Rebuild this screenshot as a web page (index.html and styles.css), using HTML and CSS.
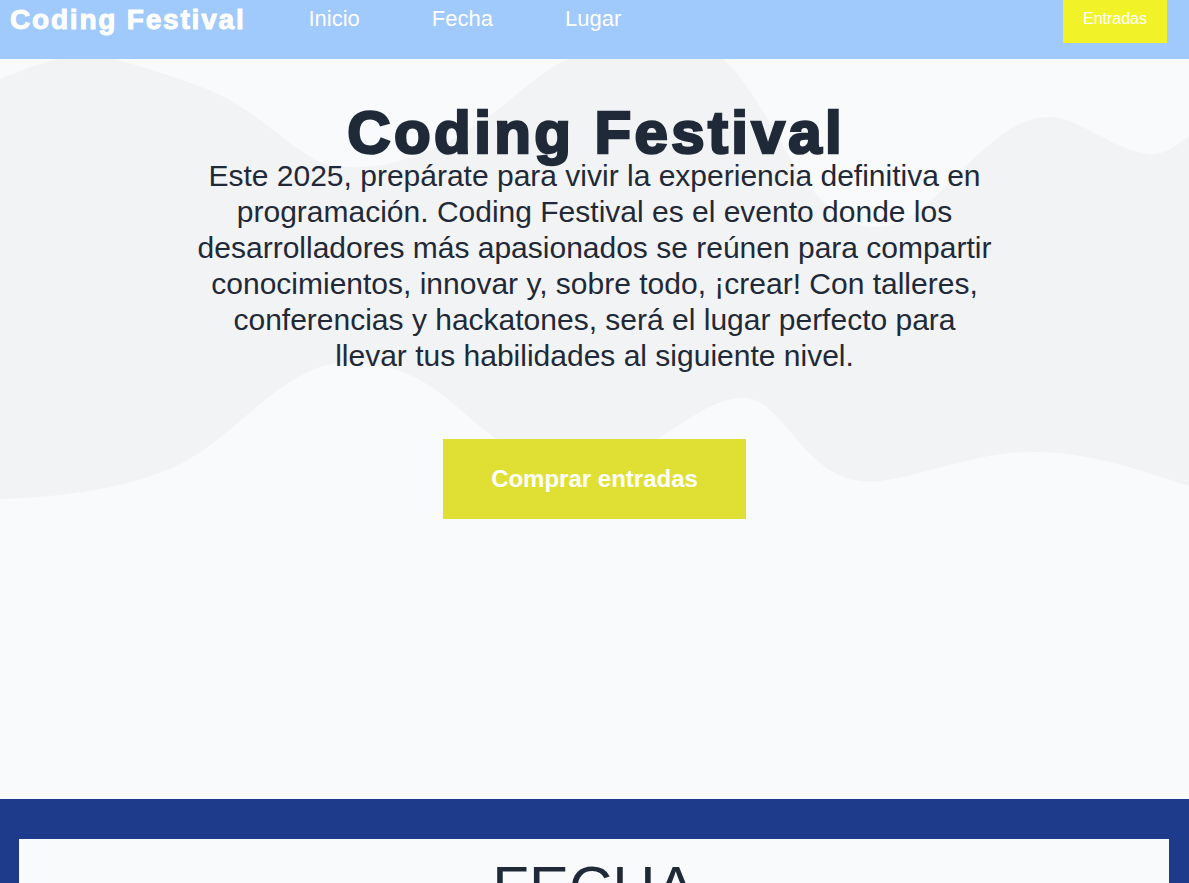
FILE: index.html
```html
<!DOCTYPE html>
<html lang="es">
<head>
<meta charset="utf-8">
<title>Coding Festival</title>
<link rel="stylesheet" href="styles.css">
</head>
<body>
<header class="navbar">
  <a class="logo" href="#">Coding Festival</a>
  <nav class="nav-links">
    <a href="#">Inicio</a>
    <a href="#">Fecha</a>
    <a href="#">Lugar</a>
  </nav>
  <a class="nav-cta" href="#">Entradas</a>
</header>

<section class="hero">
  <svg class="hero-waves" viewBox="0 0 1189 740" preserveAspectRatio="none" aria-hidden="true">
    <path fill="#f2f3f5" d="M0,20 C30,8 60,-4 90,-4 C105,-4 110,-2 114,0 C150,10 200,25 228,40 C260,58 285,82 303,93 C315,101 325,107 340,107 C390,114 450,90 511,40 C535,20 550,8 568,0 C600,-20 690,-20 723,0 C745,18 770,65 791,100 C808,130 840,168 875,168 C915,168 940,130 973,100 C995,80 1020,58 1049,58 C1080,58 1110,90 1148,95 C1165,97 1178,85 1189,77 L1189,427 C1150,415 1100,395 1040,393 C980,391 930,415 880,422 C845,426 825,410 805,390 C780,360 765,339 743,339 C715,339 690,360 660,378 C620,400 560,405 520,392 C480,378 450,330 400,312 C370,302 345,300 320,308 C270,325 230,380 180,405 C130,430 60,438 0,440 Z"/>
  </svg>
  <div class="hero-content">
    <h1 class="hero-title">Coding Festival</h1>
    <p class="hero-text">Este 2025, prepárate para vivir la experiencia definitiva en programación. Coding Festival es el evento donde los desarrolladores más apasionados se reúnen para compartir conocimientos, innovar y, sobre todo, ¡crear! Con talleres, conferencias y hackatones, será el lugar perfecto para llevar tus habilidades al siguiente nivel.</p>
    <a class="hero-button" href="#">Comprar entradas</a>
  </div>
</section>

<section class="date-section">
  <div class="date-card">
    <h2 class="section-title">FECHA</h2>
    <p class="date-text">Del 15 al 17 de octubre de 2025</p>
  </div>
</section>
</body>
</html>
```

FILE: styles.css
```css
* { box-sizing: border-box; }

body {
  margin: 0;
  font-family: "Liberation Sans", Arial, sans-serif;
  background: #f8fafc;
  color: #1f2937;
}

a { text-decoration: none; }

.navbar {
  display: flex;
  align-items: flex-start;
  height: 59px;
  background: #a0c9fc;
  padding: 0 22px 0 10px;
}

.logo {
  color: #ffffff;
  font-size: 28px;
  font-weight: 700;
  letter-spacing: 1.8px;
  -webkit-text-stroke: 1px #ffffff;
  line-height: 32px;
  margin-top: 4px;
  white-space: nowrap;
}

.nav-links {
  display: flex;
  gap: 72px;
  margin-left: 63px;
  margin-top: 6px;
}

.nav-links a {
  color: #ffffff;
  font-size: 22px;
  line-height: 26px;
}

.nav-cta {
  margin-left: auto;
  background: #f2f229;
  color: #ffffff;
  font-size: 16px;
  line-height: 19px;
  padding: 9px 20px 15px;
}

.hero {
  position: relative;
  height: 740px;
  overflow: hidden;
  background: #f8fafc;
}

.hero-waves {
  position: absolute;
  inset: 0;
  width: 100%;
  height: 100%;
}

.hero-content {
  position: relative;
  display: flex;
  flex-direction: column;
  align-items: center;
  padding-top: 44px;
}

.hero-title {
  margin: 0;
  font-size: 60px;
  line-height: 60px;
  font-weight: 700;
  letter-spacing: 3.4px;
  padding-left: 3.4px;
  -webkit-text-stroke: 2.6px #1f2937;
  color: #1f2937;
}

.hero-text {
  margin: -5px 0 0;
  max-width: 797px;
  font-size: 30px;
  line-height: 36px;
  text-align: center;
  color: #1f2937;
}

.hero-button {
  margin-top: 65px;
  background: #e0df33;
  color: #ffffff;
  font-size: 24px;
  line-height: 32px;
  font-weight: 700;
  padding: 24px 48px;
}

.date-section {
  background: #1e3a8a;
  padding: 40px 20px 40px 19px;
}

.date-card {
  background: #f8fafc;
  padding: 19px 20px 40px;
  text-align: center;
}

.section-title {
  margin: 0;
  font-size: 60px;
  line-height: 60px;
  font-weight: 400;
  color: #1f2937;
}

.date-text {
  margin: 24px 0 0;
  font-size: 30px;
  line-height: 36px;
}
```
